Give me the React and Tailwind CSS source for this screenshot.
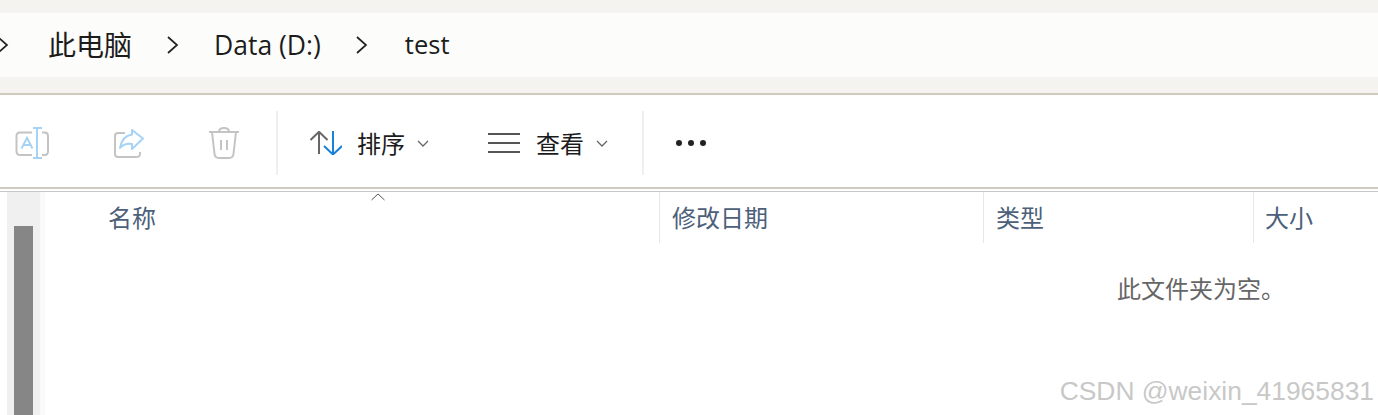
const cjk = "font-['Open_Sans','Noto_Sans_CJK_SC',sans-serif]";

function Crumb({ label, className }) {
  return <span className={`text-[#1c1c1c] ${className}`}>{label}</span>;
}

function Sep({ className }) {
  return (
    <svg width="12" height="20" viewBox="0 0 12 20" className={`shrink-0 ${className}`} fill="none" stroke="#222" strokeWidth="1.7">
      <path d="M1 2 10 10 1 18" />
    </svg>
  );
}

function RenameIcon() {
  return (
    <svg width="34" height="32" viewBox="0 0 34 32" fill="none" strokeWidth="2">
      <path d="M17 5.500H5Q1.500 5.500 1.500 9V24Q1.500 28 5 28H17M27 5.500H30Q33 5.500 33 9V24Q33 28 30 28H27" stroke="#c4c4c4" />
      <path d="M22 1V31M18 1H27M18 31H27M6.500 21.500 12 11 17.500 21.500M8.500 18H15.500" stroke="#a6d3f5" />
    </svg>
  );
}

function ShareIcon() {
  return (
    <svg width="32" height="30" viewBox="0 0 32 30" fill="none" strokeWidth="2">
      <path d="M12 5H5Q2 5 2 8V26Q2 29 5 29H23Q27 29 27 26V24" stroke="#c4c4c4" />
      <path d="M19 2 30 10.500 19 21V16Q11 15 7 20 9 8 19 6.500Z" stroke="#a6d3f5" strokeLinejoin="round" />
    </svg>
  );
}

function TrashIcon() {
  return (
    <svg width="30" height="32" viewBox="0 0 30 32" fill="none" stroke="#c4c4c4" strokeWidth="2">
      <path d="M0 5H30M3 5 5.500 27Q6 31 10 31H20Q24 31 24.500 27L27 5M10 5Q10 1 15 1 20 1 20 5M12 13V23M18 13V23" />
    </svg>
  );
}

function SortIcon() {
  return (
    <svg width="32" height="24" viewBox="0 0 32 24" fill="none" strokeWidth="2">
      <path d="M0.500 9 9 0.800 17.500 9M9 1V23" stroke="#666" />
      <path d="M14 15 23 23.500 32 15M23 0V23" stroke="#1a80d8" />
    </svg>
  );
}

function DropChevron({ className }) {
  return (
    <svg width="12" height="7" viewBox="0 0 12 7" fill="none" stroke="#666" strokeWidth="1.300" className={className}>
      <path d="M1 1 6 6 11 1" />
    </svg>
  );
}

function Column({ label, className }) {
  return (
    <div className={`h-[51px] flex items-center px-3 border-r border-[#e8e8e8] text-[#4c607a] text-[24px] ${className}`}>
      {label}
    </div>
  );
}

export default function App() {
  return (
    <div className={`w-[1378px] h-[415px] overflow-hidden bg-white flex flex-col relative ${cjk}`}>
      {/* address bar */}
      <div className="h-[93px] bg-[#f4f3f0] py-[13px] pb-4 shrink-0">
        <div className="h-16 bg-[#fcfcfa] flex items-center text-[26.500px] leading-none">
          <Sep className="-ml-[3px]" />
          <Crumb label="此电脑" className="ml-[39px] text-[28px]" />
          <Sep className="ml-[35px]" />
          <Crumb label="Data (D:)" className="ml-[35px]" />
          <Sep className="ml-[35px]" />
          <Crumb label="test" className="ml-[37px] text-[25.500px]" />
        </div>
      </div>
      <div className="h-0.5 bg-[#cfcac0] shrink-0" />

      {/* toolbar */}
      <div className="h-[92px] shrink-0 flex items-center pt-1">
        <div className="ml-[15px] flex items-center">
          <RenameIcon />
          <div className="ml-[64px]"><ShareIcon /></div>
          <div className="ml-[64px]"><TrashIcon /></div>
        </div>
        <div className="ml-[37px] w-0.5 h-[64px] bg-[#efefef]" />
        <div className="ml-8"><SortIcon /></div>
        <span className="ml-[15px] mt-0.5 text-[24px] text-[#1c1c1c]">排序</span>
        <DropChevron className="ml-3" />
        <div className="ml-[59px] w-8 h-5 flex flex-col justify-between">
          <div className="h-0.5 bg-[#555]" />
          <div className="h-0.5 bg-[#555]" />
          <div className="h-0.5 bg-[#555]" />
        </div>
        <span className="ml-[16px] mt-0.5 text-[24px] text-[#1c1c1c]">查看</span>
        <DropChevron className="ml-3" />
        <div className="ml-[34px] w-0.5 h-[64px] bg-[#efefef]" />
        <div className="ml-[32px] flex gap-[6px]">
          <div className="w-1.5 h-1.5 rounded-full bg-[#222]" />
          <div className="w-1.5 h-1.5 rounded-full bg-[#222]" />
          <div className="w-1.5 h-1.5 rounded-full bg-[#222]" />
        </div>
      </div>
      <div className="h-0.5 bg-[#cfcac0] shrink-0" />
      <div className="h-0.5 shrink-0" />
      <div className="h-px bg-[#c8c8c8] shrink-0" />

      {/* body */}
      <div className="flex-1 flex min-h-0">
        <div className="w-[7px] shrink-0" />
        <div className="w-[33px] shrink-0 bg-[#f0f0f0] pt-[34px] px-[7px]">
          <div className="w-[19px] h-full bg-[#868686]" />
        </div>
        <div className="w-[5px] shrink-0 bg-[#fafafa]" />
        <div className="flex-1 min-w-0">
          <div className="flex relative">
            <svg width="14" height="8" viewBox="0 0 14 8" className="absolute left-[326px] top-px" fill="none" stroke="#555" strokeWidth="1">
              <path d="M0.500 7 7 1 13.500 7" />
            </svg>
            <Column label="名称" className="w-[615px] pl-[63px]" />
            <Column label="修改日期" className="w-[324px]" />
            <Column label="类型" className="w-[270px]" />
            <Column label="大小" className="flex-1 border-r-0 pl-[11px]" />
          </div>
          <div className="pt-[28px] pl-[1072px] text-[24px] leading-9 text-[#666] whitespace-nowrap">此文件夹为空。</div>
        </div>
      </div>

      <span className="absolute right-[4px] bottom-[10px] text-[26.400px] leading-7 font-['Liberation_Sans',sans-serif] text-[#c8c8c8]">
        CSDN @weixin_41965831
      </span>
    </div>
  );
}
